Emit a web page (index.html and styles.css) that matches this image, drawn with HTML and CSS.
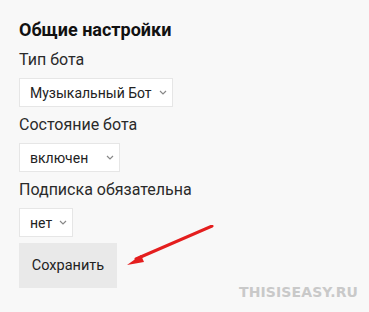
FILE: index.html
```html
<!DOCTYPE html>
<html lang="ru">

<head>
    <meta charset="UTF-8">
    <meta name="viewport" content="width=device-width, initial-scale=1.0">
    <title>Общие настройки</title>
    <link rel="stylesheet" href="styles.css">
</head>

<body>
    <div class="settings">
        <h2>Общие настройки</h2>

        <div class="field">
            <label for="bot-type">Тип бота</label>
            <div class="select-box wide">
                <select id="bot-type">
                    <option>Музыкальный Бот</option>
                </select>
                <svg class="chevron" width="8" height="5" viewBox="0 0 8 5"><path d="M1 1l3 3 3-3" fill="none" stroke="#888" stroke-width="1.2"/></svg>
            </div>
        </div>

        <div class="field">
            <label for="bot-state">Состояние бота</label>
            <div class="select-box medium">
                <select id="bot-state">
                    <option>включен</option>
                    <option>выключен</option>
                </select>
                <svg class="chevron" width="8" height="5" viewBox="0 0 8 5"><path d="M1 1l3 3 3-3" fill="none" stroke="#888" stroke-width="1.2"/></svg>
            </div>
        </div>

        <div class="field">
            <label for="sub">Подписка обязательна</label>
            <div class="select-box small">
                <select id="sub">
                    <option>нет</option>
                    <option>да</option>
                </select>
                <svg class="chevron" width="8" height="5" viewBox="0 0 8 5"><path d="M1 1l3 3 3-3" fill="none" stroke="#888" stroke-width="1.2"/></svg>
            </div>
        </div>

        <button class="save-btn">Сохранить</button>
    </div>

    <!-- стрелка на кнопку -->
    <svg class="arrow" width="100" height="50" viewBox="0 0 100 50">
        <line x1="96" y1="1" x2="20" y2="34" stroke="#e41e1e" stroke-width="3" stroke-linecap="round"/>
        <path d="M11 40 L25 30 L28 37 Z" fill="#e41e1e"/>
    </svg>

    <div class="watermark">THISISEASY.RU</div>
</body>

</html>
```

FILE: styles.css
```css
body {
    margin: 0;
    background-color: #f8f8f8;
    font-family: 'Roboto', 'Liberation Sans', sans-serif;
    color: #222;
    height: 312px;
    position: relative;
    overflow: hidden;
}

.settings {
    padding: 18px 0 0 19px;
}

h2 {
    margin: 0 0 6px;
    font-size: 18px;
    line-height: 24px;
    font-weight: bold;
    color: #111;
}

.field {
    margin-bottom: 6px;
}

.field label {
    display: block;
    font-size: 16px;
    line-height: 24px;
    margin-bottom: 6px;
    color: #2a2a2a;
}

.select-box {
    position: relative;
    height: 29px;
    box-sizing: border-box;
}

.select-box.wide {
    width: 154px;
}

.select-box.medium {
    width: 101px;
}

.select-box.small {
    width: 54px;
}

.select-box select {
    appearance: none;
    -webkit-appearance: none;
    width: 100%;
    height: 100%;
    margin: 0;
    padding: 0 0 0 10px;
    border: 1px solid #e6e6e6;
    background-color: #fff;
    font-family: inherit;
    font-size: 14px;
    color: #222;
    outline: none;
}

.chevron {
    position: absolute;
    right: 6px;
    top: 12px;
    pointer-events: none;
}

.save-btn {
    display: block;
    margin-top: 1px;
    width: 98px;
    height: 45px;
    border: none;
    background-color: #e9e9e9;
    font-family: inherit;
    font-size: 14.5px;
    color: #222;
    padding: 0;
}

.arrow {
    position: absolute;
    left: 116px;
    top: 225px;
}

.watermark {
    position: absolute;
    right: 11px;
    bottom: 12px;
    font-family: 'DejaVu Sans', sans-serif;
    font-weight: bold;
    font-size: 14px;
    letter-spacing: 0.1px;
    color: #c9c9c9;
}
```
